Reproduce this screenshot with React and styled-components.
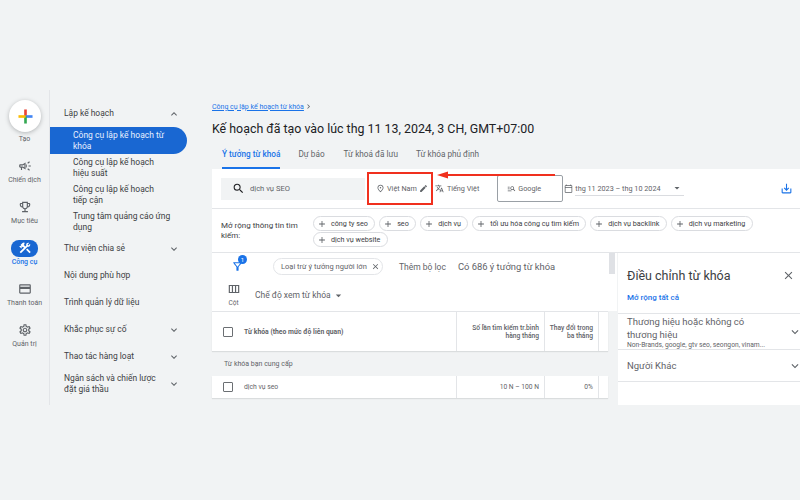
import React from 'react';
import styled, { createGlobalStyle } from 'styled-components';
import {
  MdOutlineCampaign, MdOutlineEmojiEvents, MdConstruction, MdOutlineCreditCard, MdOutlineSettings,
  MdKeyboardArrowDown, MdKeyboardArrowUp, MdSearch, MdOutlinePlace, MdEdit, MdTranslate,
  MdOutlineCalendarToday, MdSaveAlt, MdAdd, MdClose, MdOutlineFilterAlt, MdOutlineViewColumn,
  MdArrowDropDown, MdOutlineManageSearch, MdChevronRight,
} from 'react-icons/md';

const Global = createGlobalStyle`
  html, body { margin: 0; padding: 0; background: #f1f3f4; }
  * { box-sizing: border-box; }
  body { font-family: Roboto, "Noto Sans", sans-serif; color: #3c4043; }
`;

const Page = styled.div`
  width: 800px;
  height: 500px;
  overflow: hidden;
  display: flex;
  padding-top: 90px;
  background: #f1f3f4;
`;

/* left rail */
const Rail = styled.nav`
  width: 50px;
  height: 315px;
  padding-top: 10px;
  border-right: 1px solid #e3e5e8;
  flex-shrink: 0;
`;

const CreateItem = styled.div`
  height: 57.5px;
  display: flex;
  flex-direction: column;
  align-items: center;
  font-size: 7px;
  color: #5f6368;
`;

const CreateButton = styled.div`
  width: 32px;
  height: 32px;
  border-radius: 50%;
  background: #fff;
  box-shadow: 0 1px 4px rgba(60, 64, 67, 0.35);
  display: flex;
  align-items: center;
  justify-content: center;
  margin-bottom: 3px;
  margin-left: 1px;
`;

const RailItem = styled.div`
  height: 41px;
  display: flex;
  flex-direction: column;
  align-items: center;
  font-size: 7px;
  line-height: 11px;
  color: ${p => (p.$active ? '#1a73e8' : '#5f6368')};
  font-weight: ${p => (p.$active ? 500 : 400)};
`;

const RailIcon = styled.div`
  width: 27px;
  height: 17px;
  border-radius: 8px;
  display: flex;
  align-items: center;
  justify-content: center;
  font-size: 14px;
  background: ${p => (p.$active ? '#1967d2' : 'transparent')};
  color: ${p => (p.$active ? '#fff' : '#5f6368')};
`;

/* section menu */
const Menu = styled.div`
  width: 150px;
  padding-top: 10px;
  flex-shrink: 0;
`;

const MenuRow = styled.div`
  height: 27px;
  width: 137px;
  padding-left: 14px;
  display: flex;
  align-items: center;
  justify-content: space-between;
  font-size: 8.45px;
  line-height: 11px;
  color: #3c4043;
  svg { font-size: 12px; color: #5f6368; margin-right: 7px; flex-shrink: 0; }
`;

const MenuText = styled.span`
  max-width: 95px;
`;

const SubRow = styled.div`
  height: 27px;
  width: 137px;
  padding: 0 14px 0 23px;
  display: flex;
  align-items: center;
  white-space: pre-line;
  font-size: 8.5px;
  line-height: 11px;
  border-radius: ${p => (p.$active ? '0 14px 14px 0' : '0')};
  background: ${p => (p.$active ? '#1967d2' : 'transparent')};
  color: ${p => (p.$active ? '#e8f0fe' : '#3c4043')};
`;

/* main column */
const Main = styled.main`
  flex: 1;
  padding-left: 12px;
  min-width: 0;
`;

const Crumb = styled.div`
  margin-top: 11px;
  height: 11px;
  display: flex;
  align-items: center;
  font-size: 7px;
  color: #1a73e8;
  span { text-decoration: underline; }
  svg { font-size: 9px; color: #5f6368; }
`;

const Title = styled.h1`
  margin: 0;
  height: 32px;
  line-height: 33px;
  font-size: 12.4px;
  font-weight: 400;
  color: #202124;
  white-space: nowrap;
`;

const Tabs = styled.div`
  display: flex;
  height: 25px;
  padding-left: 10px;
`;

const Tab = styled.div`
  height: 25px;
  padding-top: 4px;
  line-height: 12px;
  font-size: 8.2px;
  margin-right: ${p => p.$gap}px;
  white-space: nowrap;
  font-weight: ${p => (p.$active ? 500 : 400)};
  color: ${p => (p.$active ? '#1a73e8' : '#5f6368')};
  border-bottom: 2px solid ${p => (p.$active ? '#1a73e8' : 'transparent')};
`;

const Toolbar = styled.div`
  position: relative;
  height: 40px;
  background: #fff;
  border-bottom: 1px solid #e3e5e8;
  display: flex;
  align-items: center;
  padding: 0 9px;
  font-size: 7.25px;
  color: #5f6368;
  white-space: nowrap;
`;

const SearchBox = styled.div`
  width: 144px;
  height: 22px;
  background: #f1f3f4;
  display: flex;
  align-items: center;
  padding-left: 11px;
  gap: 5px;
  font-size: 7.6px;
  svg { font-size: 13px; color: #202124; }
`;

const ToolItem = styled.div`
  display: flex;
  align-items: center;
  gap: ${p => p.$gap || 2}px;
  margin-left: ${p => p.$left}px;
  svg { font-size: 9px; color: #5f6368; flex-shrink: 0; }
`;

const GoogleBox = styled.div`
  width: 66px;
  height: 27px;
  margin-left: 18px;
  border: 1px solid #9aa0a6;
  border-radius: 2px;
  display: flex;
  align-items: center;
  gap: 2px;
  padding-left: 9px;
  svg { font-size: 9px; color: #5f6368; }
`;

const DatePick = styled.div`
  width: 109px;
  height: 14px;
  display: flex;
  align-items: center;
  justify-content: space-between;
  border-bottom: 1px solid #dadce0;
  svg { font-size: 12px; color: #5f6368; margin-right: 1px; }
`;

const Download = styled.div`
  margin-left: auto;
  margin-right: -2px;
  display: flex;
  svg { font-size: 13px; color: #1a73e8; }
`;

const RedBox = styled.div`
  position: absolute;
  left: 155px;
  top: 3px;
  width: 66px;
  height: 33px;
  border: 2px solid #f0301e;
`;

const RedArrow = styled.svg`
  position: absolute;
  left: 225px;
  top: 2px;
  width: 120px;
  height: 8px;
`;

const ExpandRow = styled.div`
  height: 44px;
  background: #fff;
  border-bottom: 1px solid #e3e5e8;
  padding: 7px 0 0 9px;
  display: flex;
`;

const ExpandLabel = styled.div`
  width: 92px;
  padding-right: 8px;
  padding-top: 5px;
  font-size: 8px;
  line-height: 10px;
  color: #3c4043;
`;

const Chips = styled.div`
  width: 445px;
  display: flex;
  flex-wrap: wrap;
  align-content: flex-start;
  gap: 1px 4px;
`;

const Chip = styled.div`
  height: 15px;
  border: 1px solid #dadce0;
  border-radius: 8px;
  padding: 0 6.35px 0 3px;
  display: flex;
  align-items: center;
  gap: 4px;
  font-size: 7.2px;
  color: #3c4043;
  white-space: nowrap;
  svg { font-size: 10px; color: #5f6368; }
`;

const Body = styled.div`
  display: flex;
  align-items: flex-start;
`;

const Left = styled.div`
  width: 405px;
  margin-right: 1px;
`;

const Controls = styled.div`
  position: relative;
  height: 58px;
  background: #fff;
`;

const ScrollThumb = styled.div`
  position: absolute;
  right: 2px;
  top: 0;
  width: 6px;
  height: 21px;
  background: #dfe1e5;
`;

const FilterRow = styled.div`
  height: 27px;
  display: flex;
  align-items: center;
  font-size: 8.5px;
  color: #5f6368;
  white-space: nowrap;
`;

const Funnel = styled.div`
  position: relative;
  width: 61px;
  padding-left: 19px;
  display: flex;
  svg { font-size: 13px; color: #1a73e8; }
`;

const Badge = styled.span`
  position: absolute;
  left: 26px;
  top: -5px;
  width: 9px;
  height: 9px;
  border-radius: 50%;
  background: #1a73e8;
  color: #fff;
  font-size: 6px;
  line-height: 9px;
  text-align: center;
`;

const FilterChip = styled.div`
  width: 110px;
  height: 17px;
  border: 1px solid #e3e5e8;
  border-radius: 9px;
  display: flex;
  align-items: center;
  gap: 4px;
  padding: 0 0 0 7px;
  font-size: 7.5px;
  svg { font-size: 9px; color: #5f6368; }
`;

const FilterLink = styled.span`
  margin-left: ${p => p.$left}px;
  font-size: ${p => p.$size || 8.5}px;
`;

const ViewRow = styled.div`
  height: 31px;
  display: flex;
  font-size: 8.5px;
  color: #5f6368;
`;

const ColumnsBtn = styled.div`
  width: 43px;
  display: flex;
  flex-direction: column;
  align-items: center;
  font-size: 6.5px;
  line-height: 9px;
  svg { font-size: 14px; color: #5f6368; margin-top: 2px; margin-bottom: 3px; }
`;

const ViewPick = styled.div`
  display: flex;
  align-items: center;
  height: 30px;
  svg { font-size: 13px; margin-left: 1px; }
`;

const TableRow = styled.div`
  width: 396px;
  height: ${p => p.$h}px;
  background: #fff;
  display: flex;
  border-top: ${p => (p.$head ? '1px solid #e3e5e8' : '0')};
  box-shadow: 0 1px 1px rgba(60, 64, 67, 0.12);
`;

const KeywordCell = styled.div`
  width: 244px;
  padding-left: 11px;
  display: flex;
  align-items: center;
  gap: 11px;
  font-size: 6.8px;
  font-weight: ${p => (p.$bold ? 700 : 400)};
  color: #5f6368;
`;

const Box = styled.span`
  width: 10px;
  height: 10px;
  border: 1.5px solid #6b6f73;
  border-radius: 1px;
  flex-shrink: 0;
`;

const NumCell = styled.div`
  width: ${p => p.$w}px;
  border-left: 1px solid #e3e5e8;
  padding-right: 5px;
  display: flex;
  align-items: center;
  justify-content: flex-end;
  text-align: right;
  font-size: 6.7px;
  line-height: 8px;
  color: #5f6368;
  font-weight: ${p => (p.$bold ? 500 : 400)};
`;

const GroupLabel = styled.div`
  height: 25px;
  padding-left: 12px;
  display: flex;
  align-items: center;
  font-size: 7px;
  color: #5f6368;
`;

/* right panel */
const Panel = styled.aside`
  width: 182px;
  height: 152px;
  background: #fff;
  flex-shrink: 0;
`;

const PanelHead = styled.div`
  height: 39px;
  padding: 5px 5px 0 9px;
  display: flex;
  align-items: center;
  justify-content: space-between;
  font-size: 12.5px;
  color: #3c4043;
  svg { font-size: 13px; color: #5f6368; }
`;

const ExpandAll = styled.div`
  height: 21px;
  padding-left: 9px;
  font-size: 8px;
  line-height: 11px;
  font-weight: 500;
  color: #1a73e8;
`;

const PanelRow = styled.div`
  height: ${p => p.$h}px;
  border-top: 1px solid #e3e5e8;
  padding-left: 9px;
  display: flex;
  align-items: center;
  justify-content: space-between;
  svg { font-size: 14px; color: #5f6368; margin-right: -2px; flex-shrink: 0; }
`;

const RowTitle = styled.div`
  font-size: 9.5px;
  line-height: 13px;
  color: #5f6368;
  width: 125px;
`;

const RowSub = styled.div`
  font-size: 6.7px;
  line-height: 8px;
  color: #5f6368;
  white-space: nowrap;
`;

const Closing = styled.div`
  border-top: 1px solid #e3e5e8;
`;

const PlusLogo = () => (
  <svg width="15" height="15" viewBox="0 0 16 16">
    <rect x="6.6" y="0.5" width="2.8" height="7.5" fill="#ea4335" />
    <rect x="8" y="6.6" width="7.5" height="2.8" fill="#4285f4" />
    <rect x="6.6" y="8" width="2.8" height="7.5" fill="#34a853" />
    <rect x="0.5" y="6.6" width="7.5" height="2.8" fill="#fbbc04" />
  </svg>
);

const railItems = [
  { label: 'Chiến dịch', Icon: MdOutlineCampaign },
  { label: 'Mục tiêu', Icon: MdOutlineEmojiEvents },
  { label: 'Công cụ', Icon: MdConstruction, active: true },
  { label: 'Thanh toán', Icon: MdOutlineCreditCard },
  { label: 'Quản trị', Icon: MdOutlineSettings },
];

const subItems = [
  { label: 'Công cụ lập kế hoạch từ\nkhóa', active: true },
  { label: 'Công cụ lập kế hoạch\nhiệu suất' },
  { label: 'Công cụ lập kế hoạch\ntiếp cận' },
  { label: 'Trung tâm quảng cáo ứng\ndụng' },
];

const menuItems = [
  { label: 'Thư viện chia sẻ', more: true },
  { label: 'Nội dung phù hợp' },
  { label: 'Trình quản lý dữ liệu' },
  { label: 'Khắc phục sự cố', more: true },
  { label: 'Thao tác hàng loạt', more: true },
  { label: 'Ngân sách và chiến lược đặt giá thầu', more: true },
];

const tabs = [
  { label: 'Ý tưởng từ khoá', gap: 18, active: true },
  { label: 'Dự báo', gap: 19 },
  { label: 'Từ khoá đã lưu', gap: 18 },
  { label: 'Từ khóa phủ định', gap: 0 },
];

const chips = ['công ty seo', 'seo', 'dịch vụ', 'tối ưu hóa công cụ tìm kiếm', 'dịch vụ backlink', 'dịch vụ marketing', 'dịch vụ website'];

export default function App() {
  return (
    <Page>
      <Global />
      <Rail>
        <CreateItem>
          <CreateButton><PlusLogo /></CreateButton>
          Tạo
        </CreateItem>
        {railItems.map(({ label, Icon, active }) => (
          <RailItem key={label} $active={active}>
            <RailIcon $active={active}><Icon /></RailIcon>
            {label}
          </RailItem>
        ))}
      </Rail>

      <Menu>
        <MenuRow>Lập kế hoạch <MdKeyboardArrowUp /></MenuRow>
        {subItems.map(s => <SubRow key={s.label} $active={s.active}>{s.label}</SubRow>)}
        {menuItems.map(m => (
          <MenuRow key={m.label}>
            <MenuText>{m.label}</MenuText>
            {m.more && <MdKeyboardArrowDown />}
          </MenuRow>
        ))}
      </Menu>

      <Main>
        <Crumb><span>Công cụ lập kế hoạch từ khóa</span><MdChevronRight /></Crumb>
        <Title>Kế hoạch đã tạo vào lúc thg 11 13, 2024, 3 CH, GMT+07:00</Title>
        <Tabs>
          {tabs.map(t => <Tab key={t.label} $gap={t.gap} $active={t.active}>{t.label}</Tab>)}
        </Tabs>

        <Toolbar>
          <SearchBox><MdSearch />dịch vụ SEO</SearchBox>
          <ToolItem $left={11}><MdOutlinePlace />Việt Nam<MdEdit /></ToolItem>
          <ToolItem $left={7} $gap={3}><MdTranslate />Tiếng Việt</ToolItem>
          <GoogleBox><MdOutlineManageSearch />Google</GoogleBox>
          <ToolItem $left={1}>
            <MdOutlineCalendarToday />
            <DatePick>thg 11 2023 – thg 10 2024<MdArrowDropDown /></DatePick>
          </ToolItem>
          <Download><MdSaveAlt /></Download>
          <RedBox />
          <RedArrow viewBox="0 0 120 8">
            <path d="M0 4 L11 0.5 L11 3 L118 3 L118 5 L11 5 L11 7.5 Z" fill="#f0301e" />
          </RedArrow>
        </Toolbar>

        <ExpandRow>
          <ExpandLabel>Mở rộng thông tin tìm kiếm:</ExpandLabel>
          <Chips>
            {chips.map(c => <Chip key={c}><MdAdd />{c}</Chip>)}
          </Chips>
        </ExpandRow>

        <Body>
          <Left>
            <Controls>
              <FilterRow>
                <Funnel><MdOutlineFilterAlt /><Badge>1</Badge></Funnel>
                <FilterChip>Loại trừ ý tưởng người lớn<MdClose /></FilterChip>
                <FilterLink $left={16}>Thêm bộ lọc</FilterLink>
                <FilterLink $left={12} $size={9.4}>Có 686 ý tưởng từ khóa</FilterLink>
              </FilterRow>
              <ViewRow>
                <ColumnsBtn><MdOutlineViewColumn />Cột</ColumnsBtn>
                <ViewPick>Chế độ xem từ khóa<MdArrowDropDown /></ViewPick>
              </ViewRow>
              <ScrollThumb />
            </Controls>
            <TableRow $h={40} $head>
              <KeywordCell $bold><Box />Từ khóa (theo mức độ liên quan)</KeywordCell>
              <NumCell $w={88} $bold>Số lần tìm kiếm tr.bình<br />hàng tháng</NumCell>
              <NumCell $w={54} $bold>Thay đổi trong<br />ba tháng</NumCell>
              <NumCell $w={10} />
            </TableRow>
            <GroupLabel>Từ khóa bạn cung cấp</GroupLabel>
            <TableRow $h={22}>
              <KeywordCell><Box />dịch vụ seo</KeywordCell>
              <NumCell $w={88}>10 N – 100 N</NumCell>
              <NumCell $w={54}>0%</NumCell>
              <NumCell $w={10} />
            </TableRow>
          </Left>

          <Panel>
            <PanelHead>Điều chỉnh từ khóa<MdClose /></PanelHead>
            <ExpandAll>Mở rộng tất cả</ExpandAll>
            <PanelRow $h={36}>
              <div>
                <RowTitle>Thương hiệu hoặc không có thương hiệu</RowTitle>
                <RowSub>Non-Brands, google, gtv seo, seongon, vinam...</RowSub>
              </div>
              <MdKeyboardArrowDown />
            </PanelRow>
            <PanelRow $h={32}>
              <RowTitle>Người Khác</RowTitle>
              <MdKeyboardArrowDown />
            </PanelRow>
            <Closing />
          </Panel>
        </Body>
      </Main>
    </Page>
  );
}
